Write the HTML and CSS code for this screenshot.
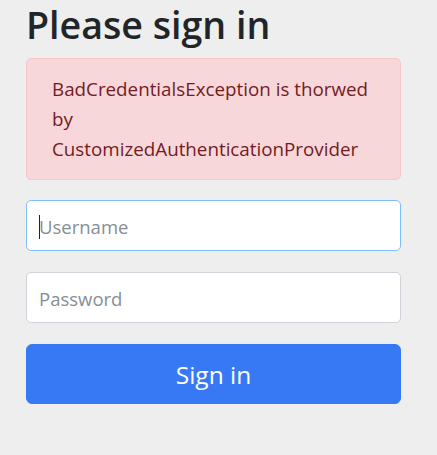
FILE: index.html
```html
<!DOCTYPE html>
<html lang="en">
<head>
<meta charset="utf-8">
<title>Please sign in</title>
<link rel="stylesheet" href="styles.css">
</head>
<body>
<div class="container">
  <form class="form-signin">
    <h2 class="form-signin-heading">Please sign in</h2>
    <div class="alert">BadCredentialsException is thorwed by CustomizedAuthenticationProvider</div>
    <p class="field"><input type="text" class="form-control is-focused" placeholder="Username"></p>
    <p class="field"><input type="password" class="form-control" placeholder="Password"></p>
    <button type="button" class="btn">Sign in</button>
  </form>
</div>
</body>
</html>
```
FILE: styles.css
```css
* { box-sizing: border-box; }
html, body {
  margin: 0;
  background: #eeeeee;
  font-family: "Open Sans", "Noto Sans", sans-serif;
  color: #212529;
}
.container {
  padding: 0 36px 0 26px;
}
.form-signin {
  display: flex;
  flex-direction: column;
}
.form-signin-heading {
  margin: 0 0 10px;
  padding-top: 2px;
  font-size: 37.6px;
  line-height: 46px;
  font-weight: 600;
  color: #212529;
}
.alert {
  background: #f8d7da;
  border: 1px solid #f5c6cb;
  color: #721c24;
  border-radius: 5px;
  padding: 15px 25px;
  font-size: 18.8px;
  line-height: 30px;
  margin-bottom: 20px;
}
.field {
  margin: 0 0 21px;
}
.form-control {
  display: block;
  width: 100%;
  height: 51px;
  padding: 10px 12px 8px;
  font-family: inherit;
  font-size: 18.5px;
  line-height: 30px;
  color: #495057;
  background: #fff;
  border: 1px solid #ced4da;
  border-radius: 5px;
  outline: none;
}
.form-control::placeholder { color: #868e96; opacity: 1; }
.is-focused {
  border-color: #80bdff;
  background-image: linear-gradient(#222, #222);
  background-repeat: no-repeat;
  background-size: 1px 24px;
  background-position: 12px 14px;
}
.btn {
  display: block;
  width: 100%;
  height: 60px;
  padding: 10px 20px;
  font-family: inherit;
  font-size: 24.5px;
  line-height: 37px;
  color: #fff;
  background: #3779f5;
  border: 1px solid #3779f5;
  border-radius: 6px;
  cursor: pointer;
}
```
